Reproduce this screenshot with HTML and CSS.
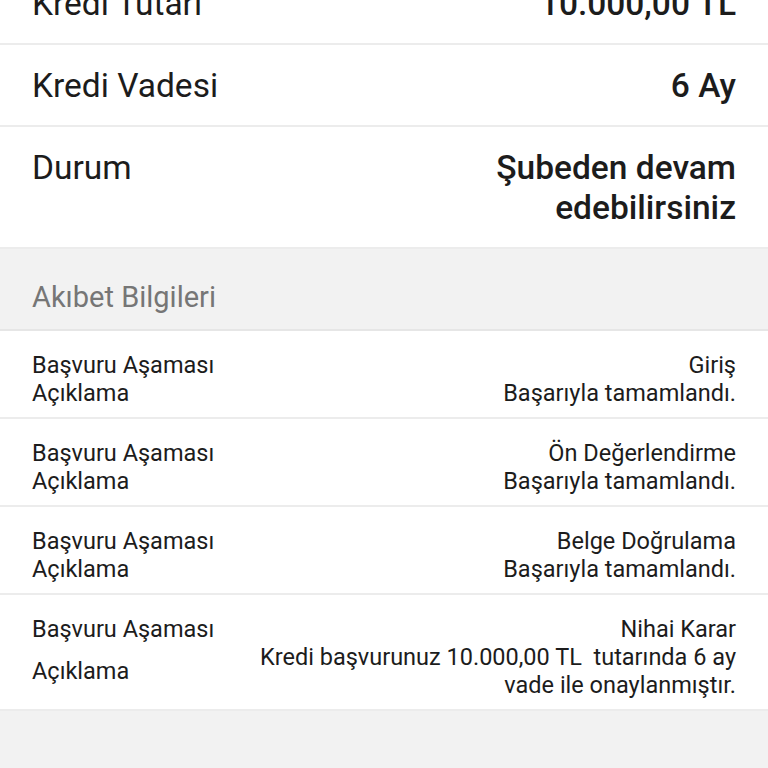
FILE: index.html
```html
<!DOCTYPE html>
<html lang="tr">
<head>
<meta charset="utf-8">
<link rel="stylesheet" href="styles.css">
</head>
<body>
<div class="page">
  <section class="summary">
    <div class="srow first">
      <div class="slabel">Kredi Tutarı</div>
      <div class="svalue">10.000,00 TL</div>
    </div>
    <div class="srow">
      <div class="slabel">Kredi Vadesi</div>
      <div class="svalue">6 Ay</div>
    </div>
    <div class="srow">
      <div class="slabel">Durum</div>
      <div class="svalue">Şubeden devam<br>edebilirsiniz</div>
    </div>
  </section>
  <div class="section-head">Akıbet Bilgileri</div>
  <section class="steps">
    <div class="step">
      <div class="k">Başvuru Aşaması</div>
      <div class="v">Giriş</div>
      <div class="k">Açıklama</div>
      <div class="v">Başarıyla tamamlandı.</div>
    </div>
    <div class="step">
      <div class="k">Başvuru Aşaması</div>
      <div class="v">Ön Değerlendirme</div>
      <div class="k">Açıklama</div>
      <div class="v">Başarıyla tamamlandı.</div>
    </div>
    <div class="step">
      <div class="k">Başvuru Aşaması</div>
      <div class="v">Belge Doğrulama</div>
      <div class="k">Açıklama</div>
      <div class="v">Başarıyla tamamlandı.</div>
    </div>
    <div class="step">
      <div class="k">Başvuru Aşaması</div>
      <div class="v">Nihai Karar</div>
      <div class="k">Açıklama</div>
      <div class="v">Kredi başvurunuz 10.000,00 TL&nbsp; tutarında 6 ay<br>vade ile onaylanmıştır.</div>
    </div>
  </section>
</div>
</body>
</html>
```

FILE: styles.css
```css
html, body {
  margin: 0;
  padding: 0;
  background: #f2f2f2;
}
body {
  font-family: Roboto, "Noto Sans", "Liberation Sans", sans-serif;
  color: #1c1c1c;
  overflow: hidden;
}
.page {
  width: 768px;
}
.summary {
  background: #fff;
  margin-top: -37px;
}
.srow {
  display: flex;
  justify-content: space-between;
  align-items: flex-start;
  padding: 21px 32px 19px;
  border-bottom: 2px solid #ececec;
  font-size: 33.5px;
  line-height: 40px;
}
.slabel {
  font-weight: 400;
}
.svalue {
  font-weight: 500;
  text-align: right;
}
.section-head {
  background: #f2f2f2;
  color: #767676;
  font-size: 29px;
  line-height: 36px;
  padding: 30px 32px 14px;
  border-bottom: 2px solid #e6e6e6;
}
.steps {
  background: #fff;
}
.step {
  display: grid;
  grid-template-columns: auto 1fr;
  column-gap: 16px;
  padding: 20px 32px 10px;
  border-bottom: 2px solid #ececec;
  font-size: 23.5px;
  line-height: 28px;
}
.step .k {
  align-self: center;
}
.step .v {
  text-align: right;
}
```
